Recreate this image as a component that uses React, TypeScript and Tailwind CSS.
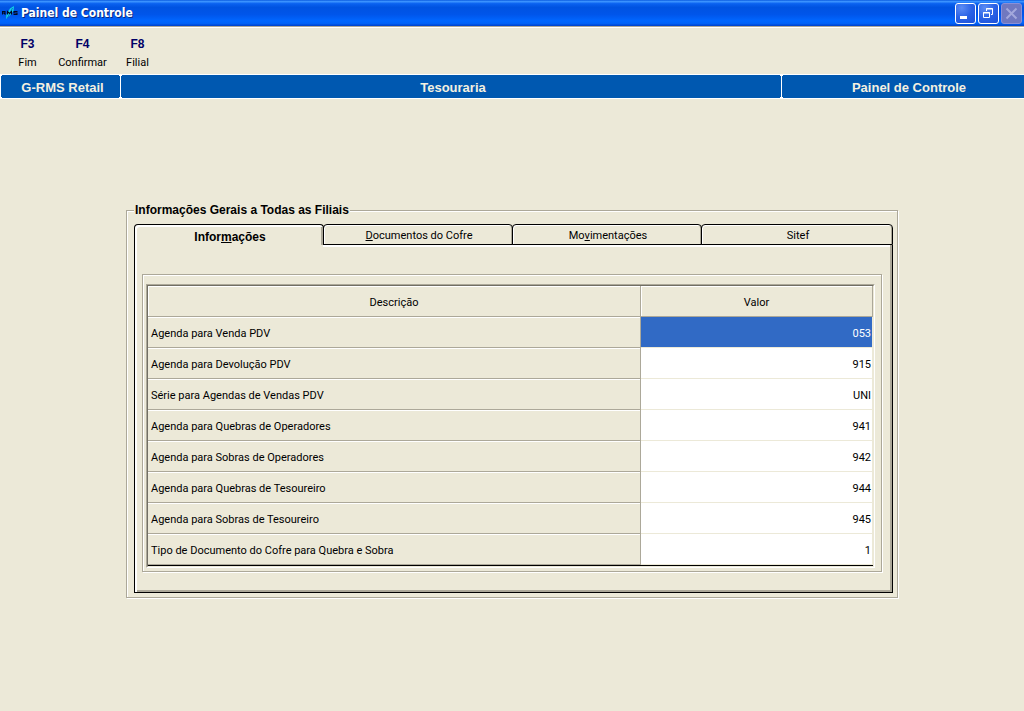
import { useState } from "react";

type Row = { label: string; value: string };

const rows: Row[] = [
  { label: "Agenda para Venda PDV", value: "053" },
  { label: "Agenda para Devolução PDV", value: "915" },
  { label: "Série para Agendas de Vendas PDV", value: "UNI" },
  { label: "Agenda para Quebras de Operadores", value: "941" },
  { label: "Agenda para Sobras de Operadores", value: "942" },
  { label: "Agenda para Quebras de Tesoureiro", value: "944" },
  { label: "Agenda para Sobras de Tesoureiro", value: "945" },
  { label: "Tipo de Documento do Cofre para Quebra e Sobra", value: "1" },
];

const actions = [
  { key: "F3", label: "Fim" },
  { key: "F4", label: "Confirmar" },
  { key: "F8", label: "Filial" },
];

const tabs = [
  { before: "Infor", hot: "m", after: "ações" },
  { before: "", hot: "D", after: "ocumentos do Cofre" },
  { before: "Mo", hot: "v", after: "imentações" },
  { before: "Sitef", hot: "", after: "" },
];

const captionButton =
  "flex size-[21px] items-center justify-center rounded-[3px] border border-white bg-[radial-gradient(circle_at_30%_20%,#5c8cf4,#2a62e6_50%,#1c50d8)]";

function TitleBar() {
  return (
    <header className="flex h-[26px] items-center bg-[linear-gradient(180deg,#0a5be0_0%,#3c94ff_6%,#0a62f0_14%,#0053e1_28%,#0055ea_55%,#0066ff_80%,#0062f8_90%,#0040c8_100%)] pr-0.5 pl-0.5">
      <svg viewBox="0 0 16 16" className="size-4 shrink-0" aria-hidden="true">
        <path d="M4 14 4.500 9.500 8 3.500l4-2.500-.5 5-4 5z" fill="#10d4e8" />
        <path d="M5.500 13 10.500 3" stroke="#0a6cc0" strokeWidth="1" fill="none" />
        <path
          d="M.5 9.500V6.500h2.500v1.500H.5M2 8l1.500 1.500M5.500 9.500V6.500L7.500 8.500l2-2V9.500M15.500 6.500H12v1.500h3V9.500h-3.500"
          stroke="#020a20"
          strokeWidth="1.100"
          fill="none"
        />
      </svg>
      <h1 className="flex-1 pl-[3px] font-['DejaVu_Sans_Condensed','Noto_Sans',sans-serif] text-[12px] leading-4 font-bold text-white [text-shadow:1px_1px_0_#0a2a80]">
        Painel de Controle
      </h1>
      <div className="flex gap-0.5">
        <button type="button" aria-label="Minimizar" className={captionButton}>
          <svg viewBox="0 0 19 19" className="size-[19px]" aria-hidden="true">
            <path d="M4 12h7v3H4z" fill="#fff" />
          </svg>
        </button>
        <button type="button" aria-label="Restaurar" className={captionButton}>
          <svg viewBox="0 0 19 19" className="size-[19px]" fill="none" stroke="#fff" aria-hidden="true">
            <path d="M7.500 7V4.500h6v6H12M7 5h7" />
            <path d="M4.500 8.500h6v5h-6zM4 9h7" />
          </svg>
        </button>
        <button
          type="button"
          aria-label="Fechar"
          disabled
          className="flex size-[21px] items-center justify-center rounded-[3px] border border-[#8a8fd8] bg-[#7078c0]"
        >
          <svg viewBox="0 0 19 19" className="size-[19px]" stroke="#a3a8dc" strokeWidth="2" aria-hidden="true">
            <path d="M4.500 4.500l10 10M14.500 4.500l-10 10" />
          </svg>
        </button>
      </div>
    </header>
  );
}

function Toolbar() {
  return (
    <nav className="flex h-12 border-t border-[#aca899] shadow-[inset_0_1px_0_#fff]">
      {actions.map((a) => (
        <button key={a.key} type="button" className="flex w-[55px] flex-col items-center gap-[3px] pt-[9px]">
          <span className="font-['Liberation_Sans',Arial,sans-serif] text-[12px] leading-4 font-bold text-[#000066]">
            {a.key}
          </span>
          <span className="text-[11px] leading-4">{a.label}</span>
        </button>
      ))}
    </nav>
  );
}

const bannerCell =
  "relative border-l border-white pt-px before:absolute before:top-0 before:-left-0.5 before:h-px before:w-[3px] before:bg-white after:absolute after:bottom-0 after:-left-0.5 after:h-px after:w-[3px] after:bg-white";

function Banner() {
  return (
    <div className="flex h-[25px] border-y border-white bg-[#0058b0] text-center font-['Liberation_Sans',Arial,sans-serif] text-[13px] leading-6 font-bold text-[#f4f0e0]">
      <div className={`${bannerCell} w-[120px] pl-1`}>G-RMS Retail</div>
      <div className={`${bannerCell} flex-1 pl-1`}>Tesouraria</div>
      <div className={`${bannerCell} w-[243px] pl-3`}>Painel de Controle</div>
    </div>
  );
}

function Tabs({ active, onSelect }: { active: number; onSelect: (i: number) => void }) {
  return (
    <div role="tablist" className="grid h-[21px] grid-cols-[189fr_189fr_189fr_192fr]">
      {tabs.map((t, i) => (
        <button
          key={i}
          type="button"
          role="tab"
          aria-selected={i === active}
          onClick={() => onSelect(i)}
          className={`-mr-px rounded-t-[4px] border-x border-t border-black pl-0.5 leading-4 last:mr-0 ${
            i === active
              ? "pt-1 font-['Liberation_Sans',Arial,sans-serif] text-[12px] font-bold shadow-[inset_2px_2px_0_#fff,inset_-2px_0_0_#aca899]"
              : "border-b pt-0.5 text-[11px] shadow-[inset_1px_1px_0_#fff,inset_-1px_0_0_#aca899,0_2px_0_#fff]"
          }`}
        >
          {t.before}
          <span className="underline">{t.hot}</span>
          {t.after}
        </button>
      ))}
    </div>
  );
}

const fixedCell =
  "h-[31px] border-r border-b border-[#aca899] p-0 pt-1 font-normal shadow-[inset_0_1px_0_#fff]";

function Grid() {
  const [selected, setSelected] = useState(0);
  return (
    <div className="border border-t-[#aca899] border-r-white border-b-white border-l-[#aca899]">
      <div className="border border-t-[#716f64] border-r-[#ece9d8] border-b-[#ece9d8] border-l-[#716f64]">
        <table className="w-full table-fixed border-separate border-spacing-0 border-b border-black">
          <thead>
            <tr>
              <th scope="col" className={`${fixedCell} w-[68%] shadow-[inset_1px_1px_0_#fff]`}>
                Descrição
              </th>
              <th scope="col" className={`${fixedCell} shadow-[inset_1px_1px_0_#fff]`}>
                Valor
              </th>
            </tr>
          </thead>
          <tbody>
            {rows.map((r, i) => (
              <tr key={r.label} onClick={() => setSelected(i)}>
                <th scope="row" className={`${fixedCell} pl-[3px] text-left`}>
                  {r.label}
                </th>
                <td
                  className={`border-r border-b border-[#ece9d8] p-0 pt-1 pr-px text-right ${
                    i === selected ? "bg-[#316ac5] text-white" : "bg-white"
                  }`}
                >
                  {r.value}
                </td>
              </tr>
            ))}
          </tbody>
        </table>
      </div>
    </div>
  );
}

export default function App() {
  const [tab, setTab] = useState(0);
  return (
    <div className="min-h-screen bg-[#ece9d8] font-[Roboto,'Liberation_Sans',sans-serif] text-[11px] leading-4 text-black">
      <TitleBar />
      <Toolbar />
      <Banner />
      <main className="pt-[103px] pb-8">
        <fieldset className="mx-auto w-full max-w-[772px] border border-[#aca899] pt-1.5 pr-1 pb-1 pl-[7px] shadow-[1px_1px_0_#fff,inset_1px_1px_0_#fff]">
          <legend className="bg-[#ece9d8] px-px font-['Liberation_Sans',Arial,sans-serif] text-[12px] leading-4 font-bold">
            Informações Gerais a Todas as Filiais
          </legend>
          <Tabs active={tab} onSelect={setTab} />
          <div
            role="tabpanel"
            className="relative border-x border-b border-black pt-[29px] pr-[10px] pb-5 pl-[7px] shadow-[inset_2px_0_0_#fff,inset_-2px_-2px_0_#aca899]"
          >
            <div className="border border-[#aca899] pt-[9px] pr-1.5 pb-[3px] pl-[3px] shadow-[1px_1px_0_#fff,inset_1px_1px_0_#fff]">
              <Grid />
            </div>
          </div>
        </fieldset>
      </main>
    </div>
  );
}
